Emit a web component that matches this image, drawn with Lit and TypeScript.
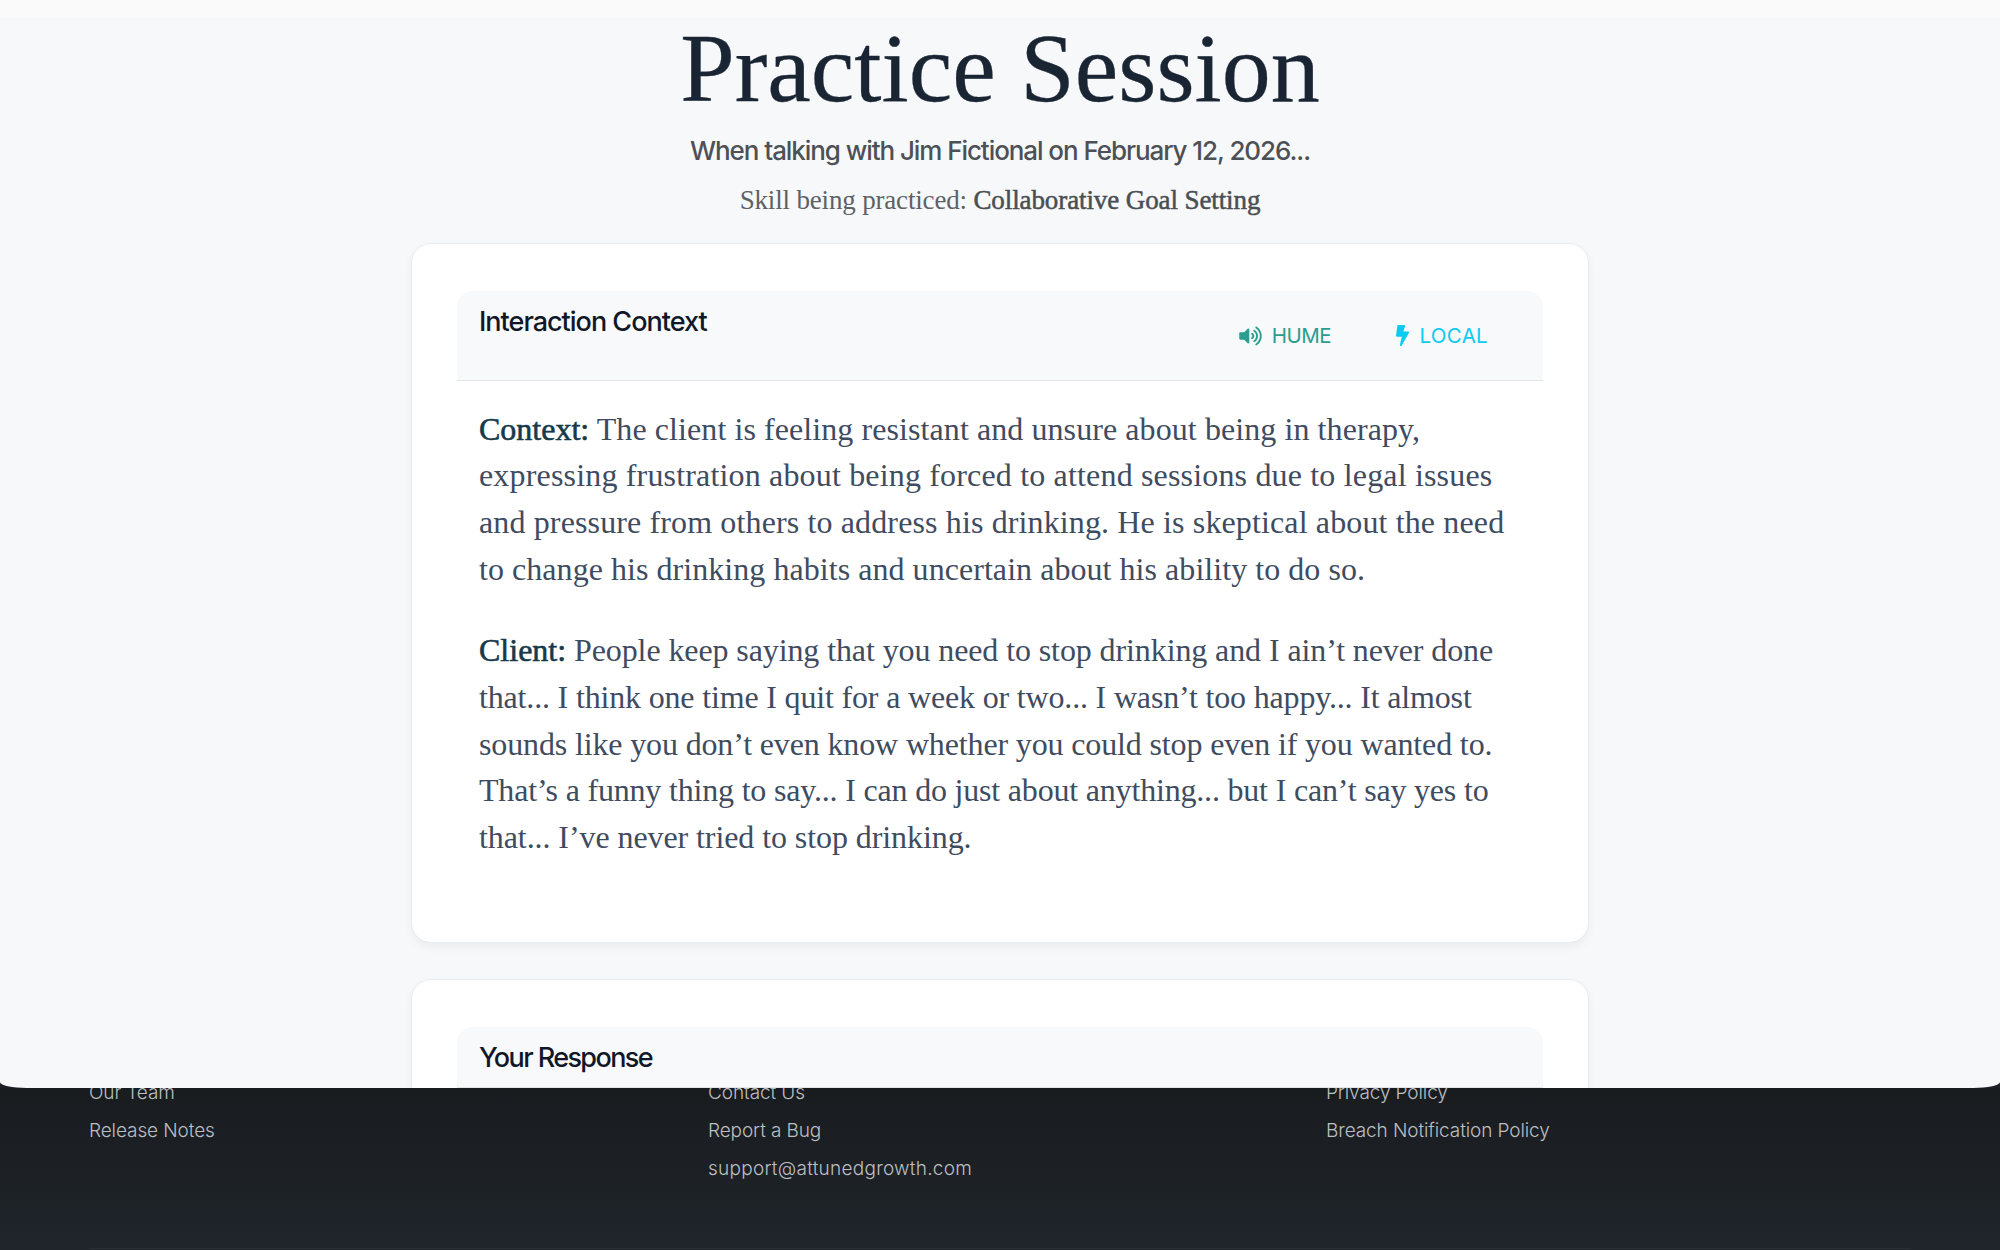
import { LitElement, html, css } from "lit";
import { customElement } from "lit/decorators.js";

type Line = { text: string; ls: number; label?: string };

const PARAS: Line[][] = [
  [
    { label: "Context:", text: " The client is feeling resistant and unsure about being in therapy,", ls: 0.08 },
    { text: "expressing frustration about being forced to attend sessions due to legal issues", ls: 0.17 },
    { text: "and pressure from others to address his drinking. He is skeptical about the need", ls: 0.13 },
    { text: "to change his drinking habits and uncertain about his ability to do so.", ls: 0.05 },
  ],
  [
    { label: "Client:", text: " People keep saying that you need to stop drinking and I ain’t never done", ls: -0.1 },
    { text: "that... I think one time I quit for a week or two... I wasn’t too happy... It almost", ls: -0.17 },
    { text: "sounds like you don’t even know whether you could stop even if you wanted to.", ls: -0.14 },
    { text: "That’s a funny thing to say... I can do just about anything... but I can’t say yes to", ls: -0.19 },
    { text: "that... I’ve never tried to stop drinking.", ls: -0.08 },
  ],
];

@customElement("app-root")
export class AppRoot extends LitElement {
  static styles = css`
    :host { display: block; width: 100%; height: 1250px; overflow: hidden; background: #1c2126; font-family: Inter, "Liberation Sans", sans-serif; }
    .main { position: relative; z-index: 2; height: 1088px; box-sizing: border-box; overflow: hidden; background: #f7f8fa; border-radius: 0 0 27px 27px / 0 0 6px 6px; }
    .topband { height: 17px; background: #fafafa; }
    .head { text-align: center; padding-top: 3px; }
    h1 { margin: 0; font: 400 98px/96px "Liberation Serif", "Times New Roman", serif; color: #1a2534; -webkit-text-stroke: 0.3px #1a2534; }
    .sub { margin: 16.5px 0 0; font-size: 26px; line-height: 36px; font-weight: 500; letter-spacing: -1.07px; color: #4d5156; }
    .skill { margin: 13px 0 0; font: 400 27px/36px "Liberation Serif", "Times New Roman", serif; letter-spacing: -0.17px; color: #5d6166; }
    .skill b { color: #4a4e53; font-weight: 400; letter-spacing: -0.1px; -webkit-text-stroke: 0.5px #4a4e53; }
    .card { width: 1178px; box-sizing: border-box; margin: 0 auto; background: #fff; border: 1px solid #e8ebef; border-radius: 20px; padding: 47px 45px; box-shadow: 0 4px 10px rgba(0,0,0,.05); }
    .card.first { margin-top: 25px; height: 700px; }
    .card.second { margin-top: 36px; }
    .chead { display: flex; justify-content: space-between; align-items: flex-start; background: #f8f9fa; border-bottom: 1px solid #e2e6ea; border-radius: 16px 16px 0 0; padding: 13px 22px 11px; }
    h2 { margin: 0; font-size: 27px; line-height: 36px; font-weight: 500; letter-spacing: -1px; color: #101828; }
    h2.tight { letter-spacing: -1.6px; }
    .acts { display: flex; gap: 64.5px; padding: 14px 33px 0 0; height: 65px; box-sizing: border-box; }
    .act { display: flex; align-items: center; height: 36px; font-size: 20.5px; }
    .act svg { display: block; fill: currentColor; }
    .hume { color: #2a9d8f; letter-spacing: -0.5px; gap: 10px; }
    .local { color: #0dcaf0; letter-spacing: 0.3px; gap: 11px; }
    .body { padding: 25px 22px 0; font: 400 32px/46.7px "Liberation Serif", "Times New Roman", serif; color: #3f4c5f; white-space: pre; }
    .body p { margin: 0 0 35px; }
    .ln { display: block; }
    .body b { color: #163a4a; font-weight: 400; -webkit-text-stroke: 0.6px #163a4a; letter-spacing: 0; }
    footer { position: relative; z-index: 1; height: 162px; box-sizing: border-box; padding: 0 89px; background: linear-gradient(#191c1f, #1f252b); font-size: 19px; font-weight: 300; color: #bcbfc2; }
    .cols { height: 160px; display: grid; grid-template-columns: 619px 618px 1fr; border-bottom: 1px solid #2a2f35; }
    .col { display: flex; flex-direction: column; margin-top: -14px; }
    .col a { height: 38px; line-height: 38px; letter-spacing: -0.1px; }
    .col a.mail { letter-spacing: 0.26px; }
  `;

  render() {
    return html`
      <div class="main">
        <div class="topband"></div>
        <div class="head">
          <h1>Practice Session</h1>
          <p class="sub">When talking with Jim Fictional on February 12, 2026...</p>
          <p class="skill">Skill being practiced: <b>Collaborative Goal Setting</b></p>
        </div>
        <section class="card first">
          <div class="chead">
            <h2>Interaction Context</h2>
            <div class="acts">
              <span class="act hume">
                <svg width="23" height="20" viewBox="0 0 576 512"><path d="M215.03 71.05L126.06 160H24c-13.26 0-24 10.74-24 24v144c0 13.25 10.74 24 24 24h102.06l88.97 88.95c15.03 15.03 40.97 4.47 40.97-16.97V88.02c0-21.46-25.96-31.98-40.97-16.97zm233.32-51.08c-11.17-7.33-26.18-4.24-33.51 6.95-7.34 11.17-4.22 26.18 6.95 33.51 66.27 43.49 105.82 116.6 105.82 195.58 0 78.98-39.55 152.09-105.82 195.58-11.17 7.32-14.29 22.34-6.95 33.5 7.04 10.71 21.93 14.56 33.51 6.95C528.27 439.58 576 351.33 576 256S528.27 72.43 448.35 19.97zM480 256c0-63.53-32.06-121.94-85.77-156.24-11.19-7.14-26.03-3.82-33.12 7.46s-3.78 26.21 7.41 33.36C408.27 165.97 432 209.11 432 256s-23.73 90.03-63.48 115.42c-11.19 7.14-14.5 22.07-7.41 33.36 6.51 10.36 21.12 15.14 33.12 7.46C447.94 377.94 480 319.54 480 256zm-141.77-76.87c-11.58-6.33-26.19-2.16-32.61 9.45-6.39 11.61-2.16 26.2 9.45 32.61C327.98 228.28 336 241.63 336 256c0 14.38-8.02 27.72-20.92 34.81-11.61 6.41-15.84 21-9.45 32.61 6.43 11.66 21.05 15.8 32.61 9.45 28.23-15.55 45.77-45 45.77-76.88s-17.54-61.32-45.78-76.86z"/></svg>
                HUME
              </span>
              <span class="act local">
                <svg width="13" height="21" viewBox="0 0 320 512"><path d="M296 160H180.6l42.6-129.8C227.2 15 215.7 0 200 0H56C44 0 33.8 8.9 32.2 20.8l-32 240C-1.7 275.2 9.5 288 24 288h118.7L96.6 482.5c-3.6 15.2 8 29.5 23.3 29.5 8.4 0 16.4-4.4 20.8-12l176-304c9.3-15.9-2.2-36-20.7-36z"/></svg>
                LOCAL
              </span>
            </div>
          </div>
          <div class="body">${PARAS.map(
            (p) => html`<p>${p.map(
              (l) => html`<span class="ln" style="letter-spacing:${l.ls}px">${l.label ? html`<b>${l.label}</b>` : ""}${l.text}</span>`
            )}</p>`
          )}</div>
        </section>
        <section class="card second">
          <div class="chead"><h2 class="tight">Your Response</h2></div>
        </section>
      </div>
      <footer>
        <div class="cols">
          <div class="col"><a>Our Team</a><a>Release Notes</a></div>
          <div class="col"><a>Contact Us</a><a>Report a Bug</a><a class="mail">support@attunedgrowth.com</a></div>
          <div class="col"><a>Privacy Policy</a><a>Breach Notification Policy</a></div>
        </div>
      </footer>
    `;
  }
}
